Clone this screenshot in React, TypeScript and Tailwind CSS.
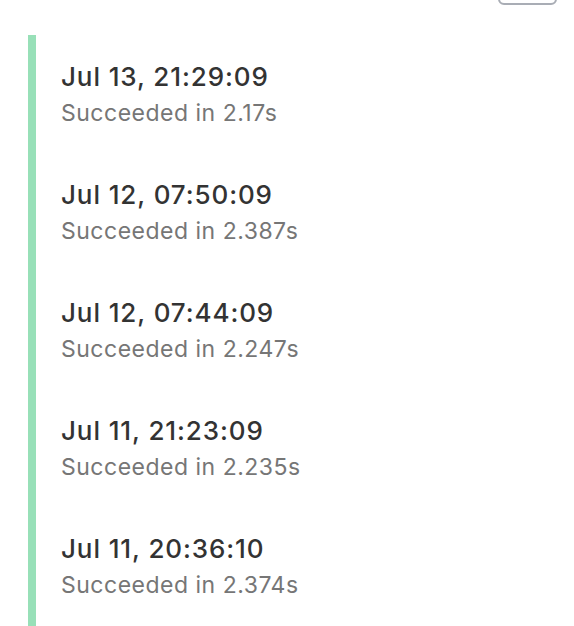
import React from "react";

const runs = [
  { time: "Jul 13, 21:29:09", duration: "2.17s" },
  { time: "Jul 12, 07:50:09", duration: "2.387s" },
  { time: "Jul 12, 07:44:09", duration: "2.247s" },
  { time: "Jul 11, 21:23:09", duration: "2.235s" },
  { time: "Jul 11, 20:36:10", duration: "2.374s" },
];

const App = () => {
  return (
    <div
      className="relative w-[574px] h-[626px] bg-white overflow-hidden"
      style={{ fontFamily: "Inter, 'Noto Sans', sans-serif" }}
    >
      {/* button above, mostly scrolled out of view */}
      <div className="absolute right-[17px] top-[-30px] w-[59px] h-[35px] rounded-md border-2 border-[#a9adb5]" />

      <div className="pt-[35px] pl-[28px]">
        <div className="border-l-[8px] border-[#98e0b8] pl-[25px] pt-[25px] pb-[40px] flex flex-col gap-[51px]">
          {runs.map((run) => (
            <div key={run.time} className="flex flex-col gap-[5px]">
              <span className="text-[26px] leading-[34px] tracking-[0.9px] text-[#333333] font-medium">
                {run.time}
              </span>
              <span className="text-[23px] leading-[28px] tracking-[0.5px] text-[#767676]">
                Succeeded in {run.duration}
              </span>
            </div>
          ))}
        </div>
      </div>
    </div>
  );
};

export default App;
